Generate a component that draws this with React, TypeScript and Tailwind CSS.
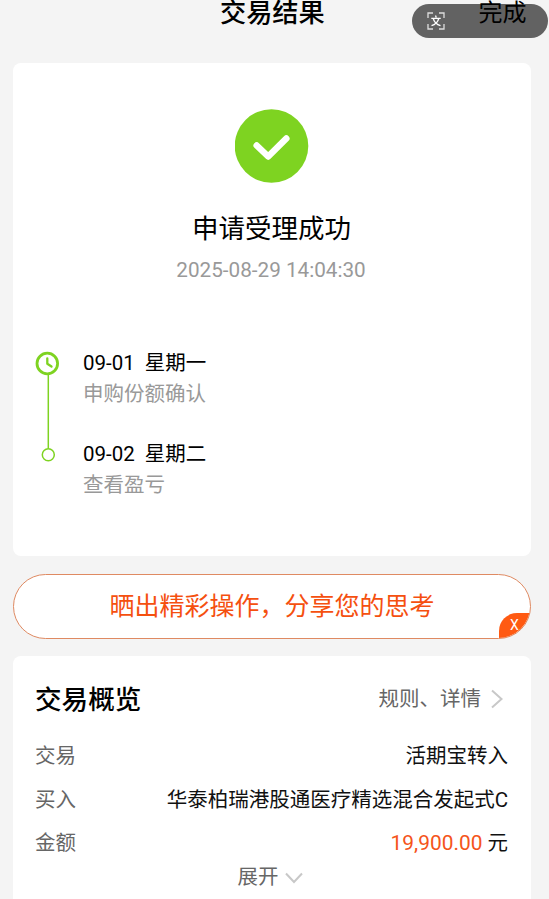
import type { ReactNode } from "react";

const steps = [
  { date: "09-01", day: "星期一", text: "申购份额确认" },
  { date: "09-02", day: "星期二", text: "查看盈亏" },
];

function Row({ label, children }: { label: string; children: ReactNode }) {
  return (
    <div className="flex h-[43.5px] items-center justify-between">
      <span className="text-[#666]">{label}</span>
      <span className="whitespace-pre text-[#111]">{children}</span>
    </div>
  );
}

function TranslateIcon() {
  return (
    <svg width="18" height="18" viewBox="0 0 18 18" fill="none" stroke="#fff" strokeWidth="1.3">
      <path d="M1 6V1h5M12 1h5v5M17 12v5h-5M6 17H1v-5" stroke="#ddd" />
      <path d="M8.500 3.500l.8 2M4.300 6.300h9.400M6.200 6.500c.9 3.200 3.300 5.900 7.300 7.200M11.800 6.500c-.9 3.200-3.300 5.900-7.300 7.200" />
    </svg>
  );
}

export default function App() {
  return (
    <div className="h-[899px] w-[549px] overflow-hidden bg-[#f4f4f4] font-[Roboto,'Noto_Sans_CJK_SC',sans-serif] text-black">
      {/* Header */}
      <header className="relative h-[63px]">
        <h1 className="pl-[220px] text-[26.2px] leading-[26px] font-medium">交易结果</h1>
        <span className="absolute top-0 left-[478.5px] text-[24px] leading-[27px]">完成</span>
        <div className="absolute top-1 left-[412px] flex h-[34px] w-[136px] items-center rounded-full bg-black/60 pl-[15px]">
          <TranslateIcon />
        </div>
      </header>

      {/* Result */}
      <section className="mx-[13px] h-[493px] w-[518px] rounded-lg bg-white pt-[46px]">
        <div className="flex flex-col items-center">
          <svg width="74" height="74" viewBox="0 0 74 74" fill="none">
            <circle cx="36.5" cy="37" r="36.8" fill="#7ed321" />
            <path d="M21.700 36.500L33.200 47.500 51.300 29.500" stroke="#fff" strokeWidth="6.500" strokeLinecap="round" strokeLinejoin="round" />
          </svg>
          <h2 className="mt-[27px] mr-px text-[26.5px] leading-[38px]">申请受理成功</h2>
          <p className="mt-[6px] mr-[2px] text-[20.7px] leading-[33px] text-[#999]">2025-08-29 14:04:30</p>
        </div>

        <div className="mt-[61px] flex pl-[22px] text-[20.5px] leading-[31px]">
          <svg width="26" height="114" viewBox="0 0 26 114" fill="none" stroke="#7ed321" className="mt-[2px] mr-[22px]">
            <circle cx="12.3" cy="13.5" r="10.3" strokeWidth="2.8" />
            <path d="M12.300 8.500v5.200l4.200 2.800" strokeWidth="2.300" strokeLinecap="round" strokeLinejoin="round" />
            <path d="M13.300 24v74.500" strokeWidth="1.5" />
            <circle cx="13.3" cy="104.8" r="6" strokeWidth="1.5" />
          </svg>
          <div className="flex flex-col gap-[29px]">
            {steps.map((step) => (
              <div key={step.date}>
                <p>
                  <span className="mr-[10px]">{step.date}</span>
                  {step.day}
                </p>
                <p className="text-[#999]">{step.text}</p>
              </div>
            ))}
          </div>
        </div>
      </section>

      {/* Share banner */}
      <div className="relative mx-[13px] mt-[18px] flex h-[65px] w-[518px] items-center justify-center overflow-hidden rounded-full border border-[#df8a62] bg-white text-[25px] text-[#f5500f]">
        晒出精彩操作，分享您的思考
        <button className="absolute right-0 bottom-0 flex h-[25px] w-[31px] items-center rounded-tl-[18px] bg-[#ff5a12] pl-[11px] text-[14px] text-white">
          X
        </button>
      </div>

      {/* Overview */}
      <section className="mx-[13px] mt-[17px] h-[260px] w-[518px] rounded-t-lg bg-white pt-[24px] pr-[23px] pl-[22px] text-[20.5px]">
        <div className="flex h-[40px] items-center justify-between">
          <h2 className="text-[26.6px] font-medium">交易概览</h2>
          <a className="-mt-[2px] flex items-center text-[#666]">
            规则、详情
            <svg width="14" height="20" viewBox="0 0 14 20" fill="none" stroke="#c8c8c8" strokeWidth="2" className="mr-[4px] ml-[9px]">
              <path d="M2 1.500l9.500 8.500L2 18.500" />
            </svg>
          </a>
        </div>
        <div className="mt-[15px]">
          <Row label="交易">活期宝转入</Row>
          <Row label="买入">华泰柏瑞港股通医疗精选混合发起式C</Row>
          <Row label="金额">
            <span className="text-[20.9px] text-[#f5541a]">19,900.00</span> 元
          </Row>
        </div>
        <div className="mr-[2px] -mt-[3px] flex h-[30px] items-center justify-center text-[#666]">
          展开
          <svg width="20" height="14" viewBox="0 0 20 14" fill="none" stroke="#c8c8c8" strokeWidth="2" className="ml-[5px]">
            <path d="M2 2.500l8 8.500 8-8.500" />
          </svg>
        </div>
      </section>
    </div>
  );
}
